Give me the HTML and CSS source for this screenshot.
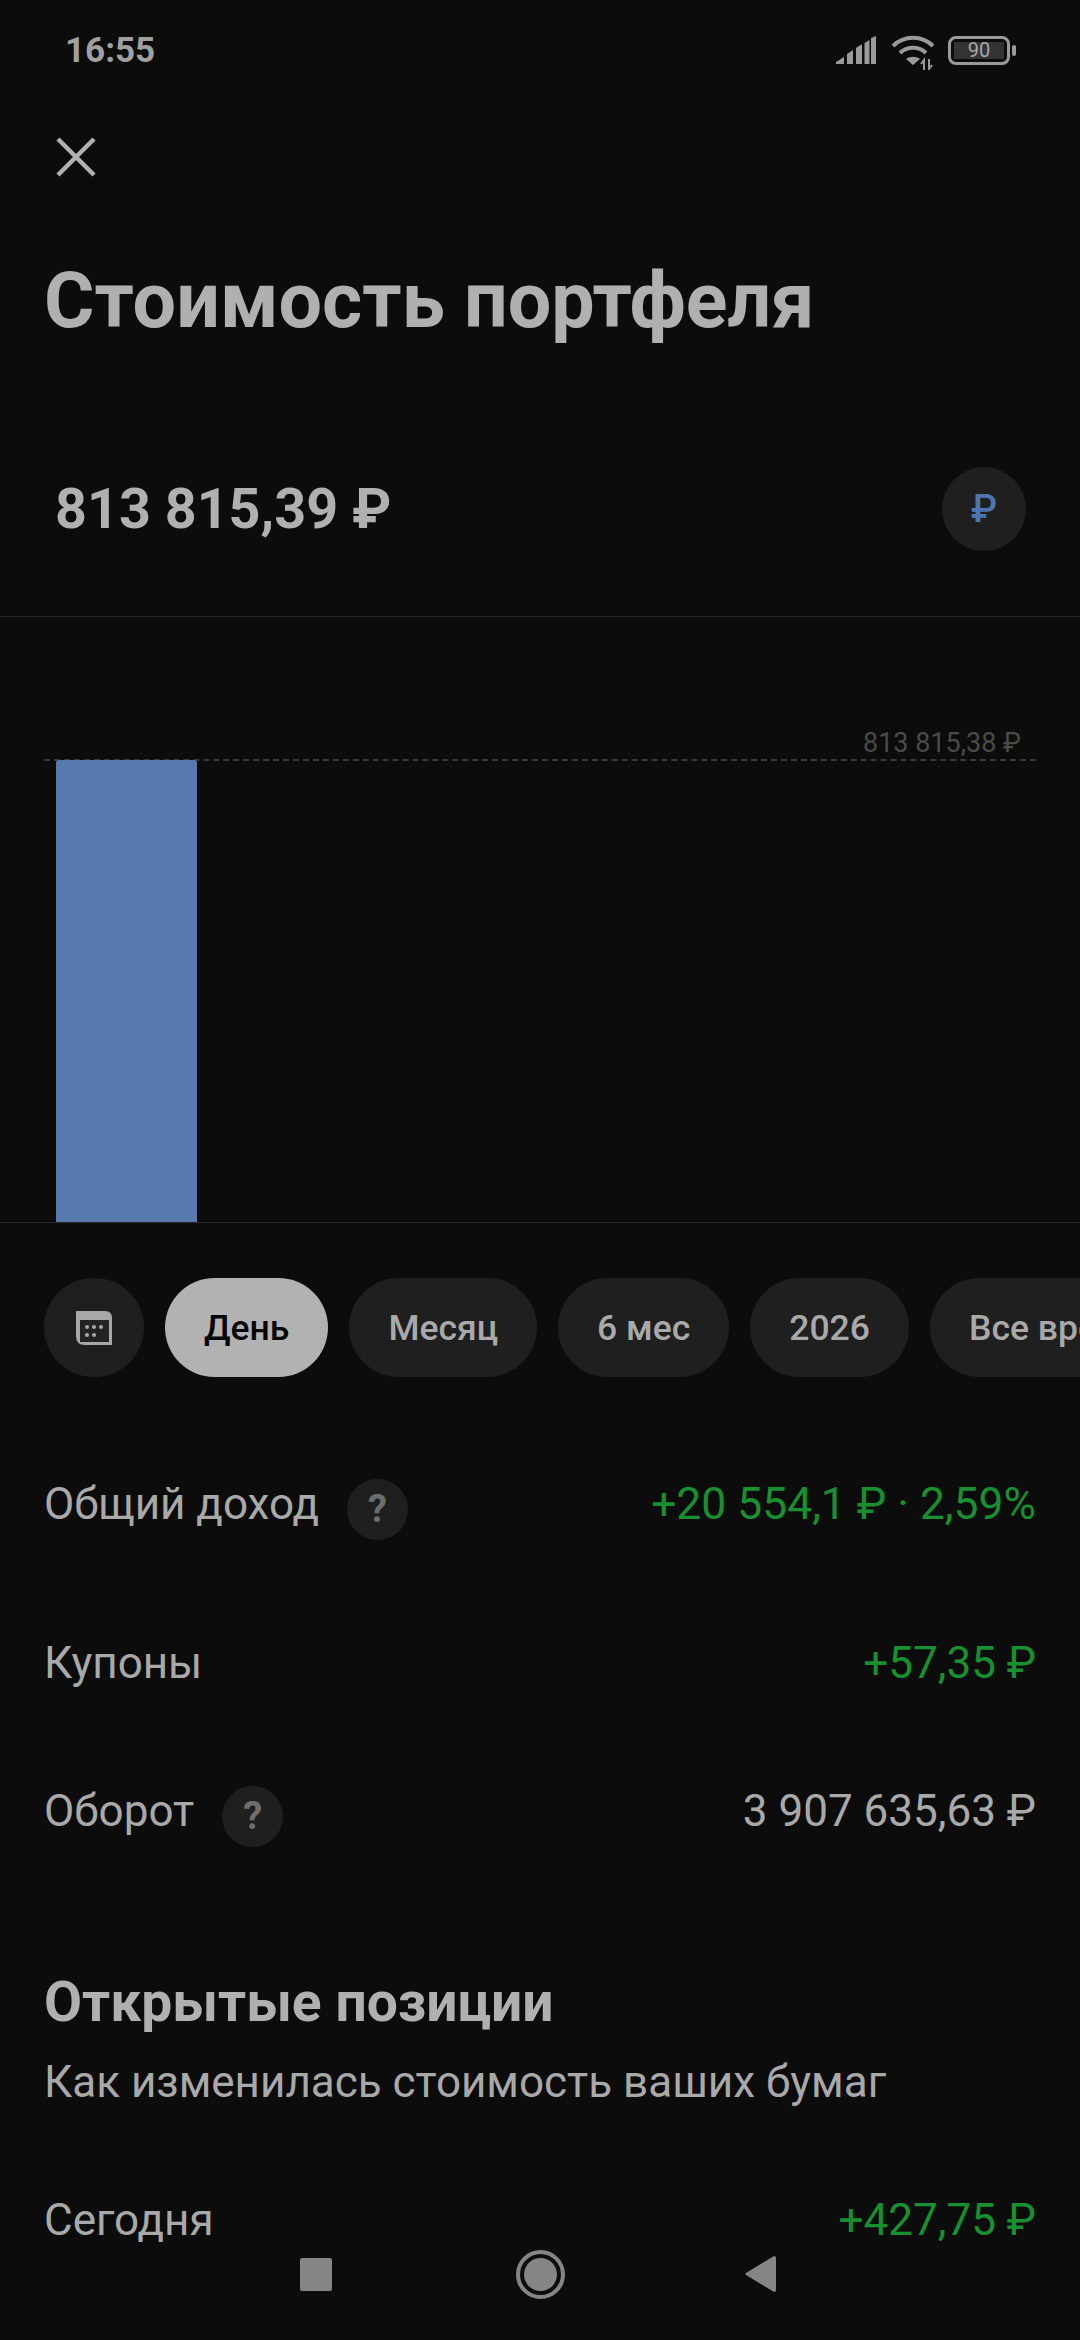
FILE: index.html
```html
<!DOCTYPE html>
<html lang="ru">
<head>
    <meta charset="UTF-8">
    <title>Стоимость портфеля</title>
    <link rel="stylesheet" href="styles.css">
</head>
<body>
<div class="screen">
    <div class="status-bar">
        <span class="time">16:55</span>
        <div class="status-icons">
            <svg class="icon-signal" width="40" height="28" viewBox="0 0 40 28"><path d="M0 28V26L8 21V28ZM11 28V18L17 14V28ZM20 28V12L26 8V28ZM28.500 28V7L33.500 4V28ZM35 28V2L40 0V28Z" fill="#9a9a9a"/></svg>
            <svg class="icon-wifi" width="46" height="36" viewBox="0 0 46 36"><g fill="none" stroke="#9a9a9a" stroke-width="4"><path d="M2 12C13 1 31 1 42 12"/><path d="M9 19C16 12 28 12 35 19"/></g><path d="M15 25C19 22 25 22 29 25L22 31Z" fill="#9a9a9a"/><path d="M33 36V26L30 30M38 25V35L41 31" fill="none" stroke="#9a9a9a" stroke-width="2"/></svg>
            <div class="battery">
                <div class="battery-body"><span class="battery-level">90</span></div>
                <div class="battery-cap"></div>
            </div>
        </div>
    </div>

    <button class="close-btn">
        <svg width="44" height="44" viewBox="0 0 44 44"><path d="M4 4 40 40M40 4 4 40" stroke="#b0b0b0" stroke-width="4.500" fill="none"/></svg>
    </button>

    <h1 class="title">Стоимость портфеля</h1>

    <div class="amount-row">
        <span class="amount">813 815,39 ₽</span>
        <div class="currency-btn">₽</div>
    </div>

    <div class="chart">
        <div class="chart-label">813 815,38 ₽</div>
        <div class="chart-line"></div>
        <div class="chart-bar"></div>
    </div>

    <div class="chips">
        <div class="chip chip-icon">
            <svg width="36" height="34" viewBox="0 0 36 34"><path d="M0 0H29Q36 0 36 7V34H9Q0 34 0 25Z" fill="#a8a8a8"/><rect x="4" y="9" width="29" height="22" fill="#232323"/><g fill="#a8a8a8"><circle cx="11" cy="16" r="2"/><circle cx="18" cy="16" r="2"/><circle cx="25" cy="16" r="2"/><circle cx="11" cy="24" r="2"/><circle cx="18" cy="24" r="2"/></g></svg>
        </div>
        <div class="chip chip-active">День</div>
        <div class="chip">Месяц</div>
        <div class="chip">6 мес</div>
        <div class="chip">2026</div>
        <div class="chip">Все время</div>
    </div>

    <div class="row row-income">
        <div class="row-name">Общий доход <span class="hint">?</span></div>
        <span class="green">+20 554,1 ₽ · 2,59%</span>
    </div>
    <div class="row row-coupons">
        <div class="row-name">Купоны</div>
        <span class="green">+57,35 ₽</span>
    </div>
    <div class="row row-turnover">
        <div class="row-name">Оборот <span class="hint">?</span></div>
        <span>3 907 635,63 ₽</span>
    </div>

    <h2 class="section-title">Открытые позиции</h2>
    <p class="section-sub">Как изменилась стоимость ваших бумаг</p>

    <div class="row row-today">
        <div class="row-name">Сегодня</div>
        <span class="green">+427,75 ₽</span>
    </div>

    <div class="nav-bar">
        <div class="nav-square"></div>
        <div class="nav-home"><div class="nav-home-dot"></div></div>
        <svg width="31" height="36" viewBox="0 0 31 36"><path d="M29 0Q31 0 31 2V34Q31 36 29 36L1 19Q0 18 1 17Z" fill="#858585"/></svg>
    </div>
</div>
</body>
</html>
```

FILE: styles.css
```css
* {
    box-sizing: border-box;
}
html, body {
    margin: 0;
    padding: 0;
    background-color: #0c0c0c;
}
.screen {
    position: relative;
    width: 1080px;
    height: 2340px;
    overflow: hidden;
    font-family: Roboto, "Noto Sans", sans-serif;
    color: #a9a9a9;
    background-color: #0c0c0c;
}
.status-bar {
    display: flex;
    justify-content: space-between;
    align-items: center;
    height: 100px;
    padding: 0 64px 0 65px;
}
.time {
    font-size: 35px;
    font-weight: 700;
    color: #a0a0a0;
}
.status-icons {
    display: flex;
    align-items: center;
    gap: 15px;
}
.icon-wifi {
    margin-top: 4px;
    margin-right: -4px;
}
.battery {
    display: flex;
    align-items: center;
    gap: 2px;
}
.battery-body {
    display: flex;
    width: 62px;
    height: 29px;
    padding: 3px;
    border: 3px solid #9a9a9a;
    border-radius: 8px;
}
.battery-level {
    flex: 1;
    font-size: 20px;
    line-height: 17px;
    text-align: center;
    color: #a8a8a8;
    background-color: #333;
}
.battery-cap {
    width: 4px;
    height: 11px;
    border-radius: 2px;
    background-color: #9a9a9a;
}
.close-btn {
    display: block;
    margin: 35px 0 0 54px;
    padding: 0;
    height: 44px;
    background: none;
    border: none;
}
.title {
    margin: 78px 0 0 44px;
    font-size: 77.200px;
    line-height: 88px;
    font-weight: 700;
    color: #b0b0b0;
}
.amount-row {
    display: flex;
    justify-content: space-between;
    align-items: center;
    height: 146px;
    margin-top: 91px;
    padding: 0 54px 0 55px;
}
.amount {
    font-size: 55.700px;
    font-weight: 700;
    color: #b0b0b0;
}
.currency-btn {
    display: flex;
    align-items: center;
    justify-content: center;
    width: 84px;
    height: 84px;
    border-radius: 50%;
    font-size: 38px;
    font-weight: 500;
    color: #4f74b3;
    background-color: #1f1f1f;
}
.chart {
    position: relative;
    height: 607px;
    margin-top: 34px;
    border-top: 1px solid #252525;
    border-bottom: 1px solid #252525;
}
.chart-label {
    position: absolute;
    top: 110px;
    right: 59px;
    font-size: 27px;
    color: #4a4a4a;
}
.chart-line {
    position: absolute;
    top: 142px;
    left: 44px;
    right: 44px;
    border-top: 2px dashed #3a3a3a;
}
.chart-bar {
    position: absolute;
    top: 143px;
    bottom: 0;
    left: 56px;
    width: 141px;
    border-radius: 3px 3px 0 0;
    background-color: #5879ad;
}
.chips {
    display: flex;
    gap: 21px;
    margin-top: 55px;
    padding-left: 44px;
}
.chip {
    display: flex;
    flex-shrink: 0;
    align-items: center;
    justify-content: center;
    height: 99px;
    padding: 0 39px;
    border-radius: 50px;
    font-size: 35.500px;
    font-weight: 500;
    color: #a9a9a9;
    background-color: #1f1f1f;
}
.chip-icon {
    width: 100px;
    padding: 0;
}
.chip-active {
    color: #050505;
    background-color: #b2b2b2;
}
.row {
    display: flex;
    justify-content: space-between;
    align-items: center;
    padding: 0 44px;
    font-size: 44px;
    color: #a9a9a9;
}
.row-name {
    display: flex;
    align-items: center;
    gap: 28px;
}
.hint {
    display: flex;
    align-items: center;
    justify-content: center;
    width: 61px;
    height: 61px;
    margin-top: 10px;
    border-radius: 50%;
    font-size: 38px;
    font-weight: 700;
    color: #6e6e6e;
    background-color: #1f1f1f;
}
.green {
    color: #189030;
}
.row-income .green {
    font-size: 44.400px;
}
.row-income {
    height: 62px;
    margin-top: 96px;
}
.row-coupons {
    height: 62px;
    margin-top: 97px;
}
.row-turnover {
    height: 62px;
    margin-top: 86px;
}
.section-title {
    margin: 130px 0 0 44px;
    font-size: 55.200px;
    line-height: 60px;
    font-weight: 700;
    color: #b0b0b0;
}
.section-sub {
    margin: 25px 0 0 44px;
    font-size: 44px;
    line-height: 50px;
    color: #a9a9a9;
}
.row-today {
    height: 62px;
    margin-top: 82px;
}
.nav-bar {
    position: absolute;
    left: 0;
    right: 0;
    bottom: 0;
    height: 132px;
    display: flex;
    align-items: center;
    padding: 0 0 0 300px;
    gap: 182px;
}
.nav-square {
    width: 32px;
    height: 33px;
    border-radius: 2px;
    background-color: #858585;
}
.nav-home {
    display: flex;
    align-items: center;
    justify-content: center;
    width: 49px;
    height: 49px;
    margin: 0 -2px 0 2px;
    border: 4px solid #858585;
    border-radius: 50%;
}
.nav-home-dot {
    width: 33px;
    height: 33px;
    border-radius: 50%;
    background-color: #858585;
}
```
